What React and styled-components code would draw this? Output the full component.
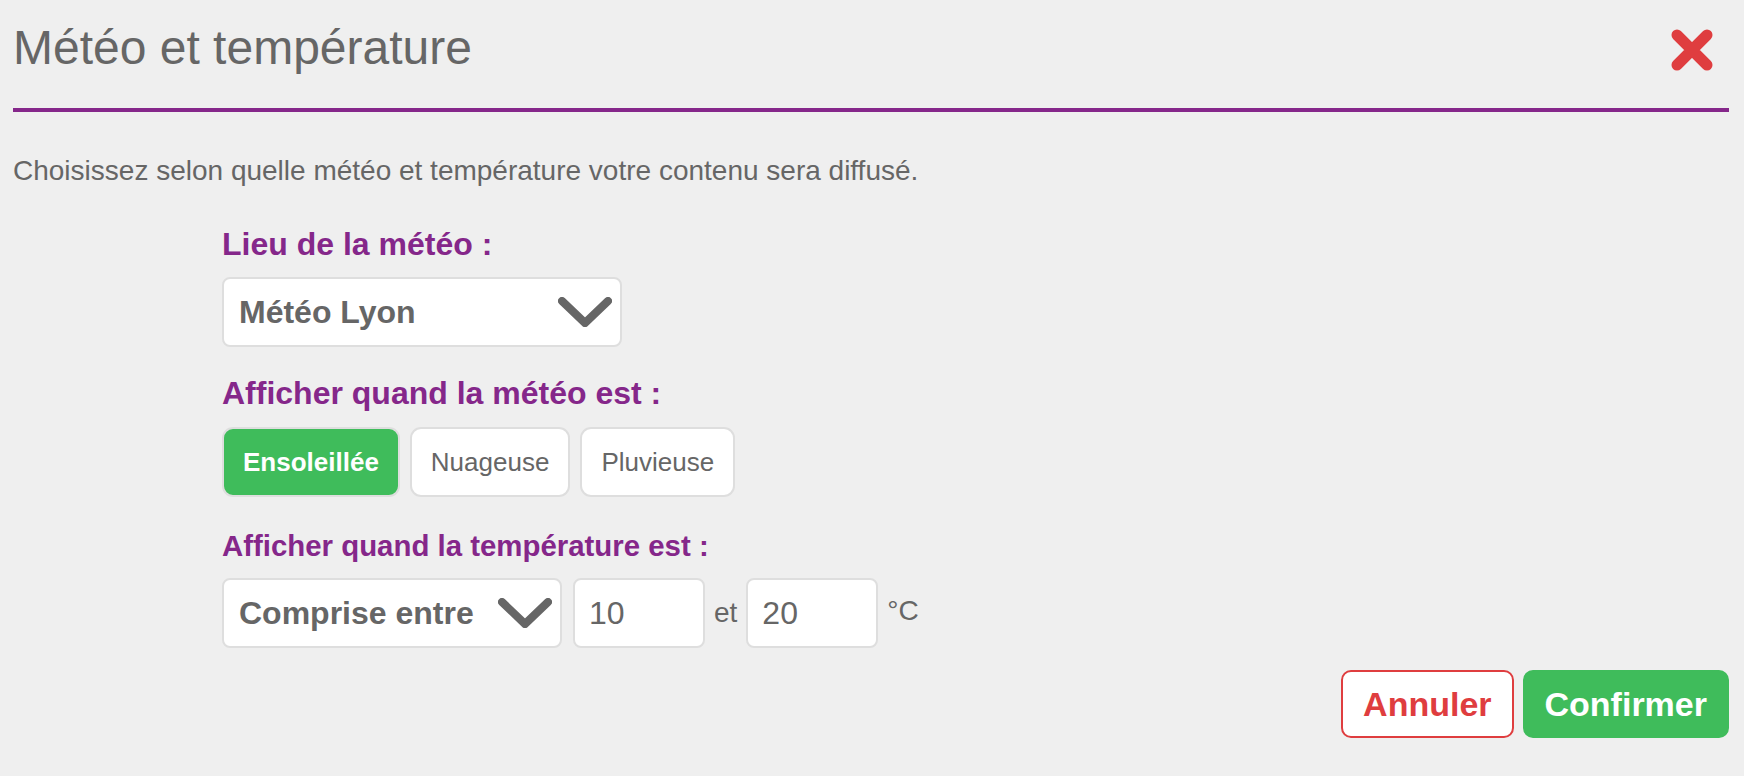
import React, { useState } from "react";
import styled, { createGlobalStyle } from "styled-components";

const GlobalStyle = createGlobalStyle`
    html, body {
        margin: 0;
        padding: 0;
        background: #efefef;
    }
    body {
        font-family: "Liberation Sans", Arial, Helvetica, sans-serif;
        color: #666;
    }
`

const Page = styled.div`
    min-height: 776px;
    padding: 0 15px 0 13px;
    box-sizing: border-box;
`

const Header = styled.div`
    display: flex;
    justify-content: space-between;
    align-items: flex-start;
    padding-top: 20px;
    padding-bottom: 33px;
    border-bottom: 4px solid #85278a;
`

const Title = styled.h1`
    margin: 0;
    font-size: 48px;
    line-height: 55px;
    font-weight: normal;
    color: #666;
`

const CloseButton = styled.button`
    margin: 9px 16px 0 0;
    padding: 0;
    border: none;
    background: none;
    width: 42px;
    height: 42px;
    cursor: pointer;
    display: flex;
`

const Description = styled.p`
    margin: 43px 0 0;
    font-size: 28px;
    line-height: 32px;
`

const Form = styled.div`
    padding-left: 209px;
    margin-top: 39px;
    display: flex;
    flex-direction: column;
    align-items: flex-start;
`

const Label = styled.div`
    font-weight: bold;
    color: #85278a;
    font-size: ${props => props.$small ? '29.4px' : '32px'};
    line-height: ${props => props.$small ? '33px' : '36px'};
    margin-top: ${props => props.$top || 0}px;
    margin-bottom: ${props => props.$bottom || 0}px;
`

const Select = styled.div`
    box-sizing: border-box;
    width: ${props => props.$width}px;
    height: 70px;
    display: flex;
    align-items: center;
    justify-content: space-between;
    padding: 0 8px 0 15px;
    background: #fff;
    border: 2px solid #dedede;
    border-radius: 8px;
    font-size: 32px;
    font-weight: bold;
    color: #666;
    cursor: pointer;
`

const Toggles = styled.div`
    display: flex;
    gap: 10px;
`

const Toggle = styled.button`
    box-sizing: border-box;
    height: 70px;
    padding: 0 19px;
    border: 2px solid #dedede;
    border-radius: 11px;
    background: ${props => props.$active ? '#3fbc5b' : '#fff'};
    color: ${props => props.$active ? '#fff' : '#666'};
    font-family: inherit;
    font-size: 26px;
    font-weight: ${props => props.$active ? 'bold' : 'normal'};
    cursor: pointer;
`

const Row = styled.div`
    display: flex;
    align-items: center;
    gap: 9px;
`

const NumberInput = styled.input`
    box-sizing: border-box;
    width: 132px;
    height: 70px;
    padding: 0 14px;
    margin-left: ${props => props.$first ? 2 : 0}px;
    border: 2px solid #dedede;
    border-radius: 8px;
    background: #fff;
    font-family: inherit;
    font-size: 32px;
    color: #666;
    outline: none;
`

const Small = styled.span`
    font-size: 28px;
    color: #666;
    margin-bottom: ${props => props.$raise || 0}px;
`

const Footer = styled.div`
    display: flex;
    justify-content: flex-end;
    gap: 9px;
    margin-top: 22px;
`

const ActionButton = styled.button`
    box-sizing: border-box;
    height: 68px;
    padding: 0 20px;
    border-radius: 10px;
    border: 2px solid ${props => props.$danger ? '#df3d3f' : '#3fbc5b'};
    background: ${props => props.$danger ? '#fff' : '#3fbc5b'};
    color: ${props => props.$danger ? '#df3d3f' : '#fff'};
    font-family: inherit;
    font-size: 34px;
    font-weight: bold;
    cursor: pointer;
`

const Chevron = () => (
    <svg width="54" height="30" viewBox="0 0 54 30">
        <polyline points="4,4 27,26 50,4" fill="none" stroke="#666" strokeWidth="8" strokeLinecap="round" strokeLinejoin="round" />
    </svg>
)

const CloseIcon = () => (
    <svg width="42" height="42" viewBox="0 0 42 42">
        <path d="M6 6 L36 36 M36 6 L6 36" stroke="#df3d3f" strokeWidth="11" strokeLinecap="round" />
    </svg>
)

export default function App () {
    const [weather, setWeather] = useState('sun')
    const [min, setMin] = useState('10')
    const [max, setMax] = useState('20')

    const weathers = [
        { id: 'sun', label: 'Ensoleillée' },
        { id: 'cloud', label: 'Nuageuse' },
        { id: 'rain', label: 'Pluvieuse' },
    ]

    return (
    <Page>
        <GlobalStyle />
        <Header>
            <Title>Météo et température</Title>
            <CloseButton aria-label="Fermer"><CloseIcon /></CloseButton>
        </Header>

        <Description>Choisissez selon quelle météo et température votre contenu sera diffusé.</Description>

        <Form>
            <Label $bottom={15}>Lieu de la météo :</Label>
            <Select $width={400}>
                <span>Météo Lyon</span>
                <Chevron />
            </Select>

            <Label $top={28} $bottom={16}>Afficher quand la météo est :</Label>
            <Toggles>
                {weathers.map(w => (
                    <Toggle key={w.id} $active={weather === w.id} onClick={() => setWeather(w.id)}>
                        {w.label}
                    </Toggle>
                ))}
            </Toggles>

            <Label $small $top={32} $bottom={16}>Afficher quand la température est :</Label>
            <Row>
                <Select $width={340}>
                    <span>Comprise entre</span>
                    <Chevron />
                </Select>
                <NumberInput $first value={min} onChange={(e) => setMin(e.target.value)} />
                <Small>et</Small>
                <NumberInput value={max} onChange={(e) => setMax(e.target.value)} />
                <Small $raise={4}>°C</Small>
            </Row>
        </Form>

        <Footer>
            <ActionButton $danger>Annuler</ActionButton>
            <ActionButton>Confirmer</ActionButton>
        </Footer>
    </Page>
    )
}
